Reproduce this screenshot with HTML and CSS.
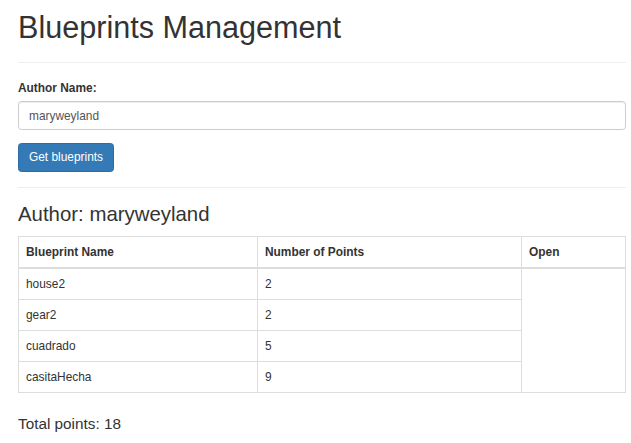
FILE: index.html
```html
<!DOCTYPE html>
<html>
<head>
<meta charset="utf-8">
<link rel="stylesheet" href="styles.css">
</head>
<body>
<div class="page">
  <h1 class="title">Blueprints Management</h1>
  <hr class="rule rule-top">
  <form class="form">
    <label class="label" for="author">Author Name:</label>
    <input class="input" id="author" type="text" value="maryweyland">
    <button class="btn" type="button">Get blueprints</button>
  </form>
  <hr class="rule rule-mid">
  <h3 class="subtitle">Author: maryweyland</h3>
  <table class="table">
    <colgroup>
      <col class="c1">
      <col class="c2">
      <col class="c3">
    </colgroup>
    <thead>
      <tr><th>Blueprint Name</th><th>Number of Points</th><th>Open</th></tr>
    </thead>
    <tbody>
      <tr><td>house2</td><td>2</td><td class="open" rowspan="4"></td></tr>
      <tr><td>gear2</td><td>2</td></tr>
      <tr><td>cuadrado</td><td>5</td></tr>
      <tr><td>casitaHecha</td><td>9</td></tr>
    </tbody>
  </table>
  <h4 class="total">Total points: 18</h4>
</div>
</body>
</html>
```
FILE: styles.css
```css
html, body {
  margin: 0;
  padding: 0;
  background: #fff;
}
body {
  font-family: "Liberation Sans", Arial, Helvetica, sans-serif;
  font-size: 11.9px;
  line-height: 17px;
  color: #333;
}
.page {
  padding: 0 5px 0 18px;
}
.title {
  font-size: 30.6px;
  line-height: 34px;
  font-weight: 500;
  margin: 10px 0 0;
}
.rule {
  border: 0;
  border-top: 1px solid #eee;
  height: 0;
  margin: 0;
}
.rule-top {
  margin-top: 18px;
}
.form {
  display: flex;
  flex-direction: column;
  align-items: flex-start;
  padding-top: 17px;
}
.label {
  font-weight: bold;
  margin-bottom: 4px;
}
.input {
  box-sizing: border-box;
  width: 100%;
  height: 29px;
  padding: 5px 10px;
  font-family: inherit;
  font-size: 11.9px;
  line-height: 17px;
  color: #555;
  border: 1px solid #ccc;
  border-radius: 3.4px;
  box-shadow: inset 0 1px 1px rgba(0,0,0,.075);
  margin: 0;
}
.btn {
  margin-top: 13px;
  height: 29px;
  padding: 5px 10px;
  font-family: inherit;
  font-size: 11.9px;
  line-height: 17px;
  color: #fff;
  background: #337ab7;
  border: 1px solid #2e6da4;
  border-radius: 3.4px;
}
.rule-mid {
  margin-top: 15px;
}
.subtitle {
  font-size: 20.4px;
  line-height: 22px;
  font-weight: 500;
  margin: 15px 0 0;
}
.table {
  margin-top: 11px;
  width: 100%;
  border-collapse: collapse;
  border: 1px solid #ddd;
  table-layout: fixed;
}
.c1 { width: 239px; }
.c2 { width: 264px; }
.table th,
.table td {
  text-align: left;
  padding: 6.5px 7px;
  line-height: 17px;
  border: 1px solid #ddd;
  vertical-align: top;
}
.table th {
  font-weight: bold;
  border-bottom: 2px solid #ddd;
}
.total {
  font-size: 15.3px;
  line-height: 17px;
  font-weight: 500;
  margin: 22px 0 0;
}
```
